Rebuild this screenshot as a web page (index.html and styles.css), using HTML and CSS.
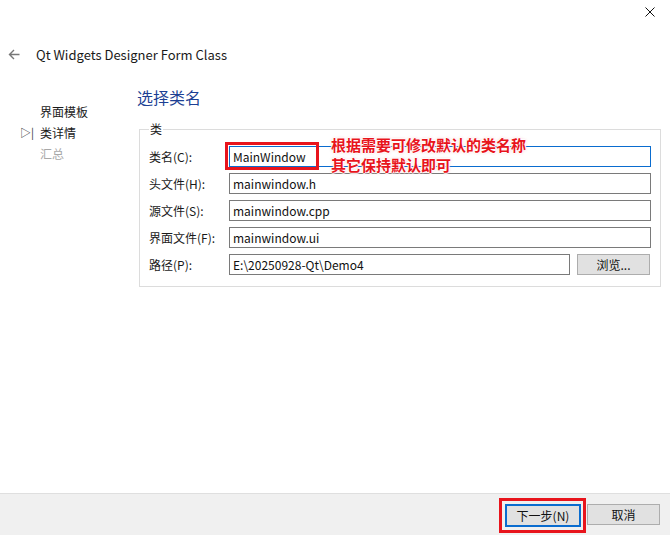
FILE: index.html
```html
<!DOCTYPE html>
<html lang="zh-CN">
<head>
  <meta charset="UTF-8">
  <title>Qt Widgets Designer Form Class</title>
  <link rel="stylesheet" href="styles.css">
</head>
<body>
  <div class="wizard">
    <div class="titlebar">
      <svg class="close" width="10" height="10" viewBox="0 0 10 10">
        <path d="M0.5 0.5 L9.5 9.5 M9.5 0.5 L0.5 9.5" stroke="#111" stroke-width="1"/>
      </svg>
    </div>

    <div class="header">
      <svg class="back" width="12" height="11" viewBox="0 0 12 11">
        <path d="M11.5 5.5 H1.5 M6 1 L1.5 5.5 L6 10" stroke="#777" stroke-width="1.4" fill="none"/>
      </svg>
      <span class="header-title">Qt Widgets Designer Form Class</span>
    </div>

    <div class="content">
      <!-- Steps -->
      <ul class="steps">
        <li>界面模板</li>
        <li class="current"><span class="marker">▷|</span>类详情</li>
        <li class="disabled">汇总</li>
      </ul>

      <div class="page">
        <h2 class="page-title">选择类名</h2>

        <fieldset class="group">
          <legend>类</legend>
          <div class="field-row">
            <label>类名(C):</label>
            <div class="input focused">MainWindow</div>
          </div>
          <div class="field-row">
            <label>头文件(H):</label>
            <div class="input">mainwindow.h</div>
          </div>
          <div class="field-row">
            <label>源文件(S):</label>
            <div class="input">mainwindow.cpp</div>
          </div>
          <div class="field-row">
            <label>界面文件(F):</label>
            <div class="input">mainwindow.ui</div>
          </div>
          <div class="field-row">
            <label>路径(P):</label>
            <div class="input path">E:\20250928-Qt\Demo4</div>
            <button class="btn browse">浏览...</button>
          </div>

          <!-- annotation drawn over the form -->
          <div class="mark-box name-mark"></div>
          <div class="note">根据需要可修改默认的类名称<br>其它保持默认即可</div>
        </fieldset>
      </div>
    </div>

    <div class="footer">
      <div class="mark-box next-mark">
        <button class="btn next">下一步(N)</button>
      </div>
      <button class="btn cancel">取消</button>
    </div>
  </div>
</body>
</html>
```

FILE: styles.css
```css
/* General */
body {
  margin: 0;
  font-family: "Noto Sans CJK SC", "Noto Sans", sans-serif;
  font-size: 12px;
  color: #1a1a1a;
  background: #fff;
}

.wizard {
  width: 670px;
  height: 535px;
  display: flex;
  flex-direction: column;
  background: #fff;
  overflow: hidden;
}

.titlebar {
  height: 25px;
  display: flex;
  justify-content: flex-end;
  align-items: flex-start;
}

.titlebar .close {
  margin: 7px 15px 0 0;
}

.header {
  height: 20px;
  margin-top: 19px;
  display: flex;
  align-items: center;
}

.header .back {
  margin-left: 8px;
  margin-right: 16px;
}

.header-title {
  font-size: 13px;
  color: #1a1a1a;
}

/* Content */
.content {
  flex: 1;
  display: flex;
}

.steps {
  width: 137px;
  margin: 0;
  padding: 37px 0 0 0;
  list-style: none;
}

.steps li {
  position: relative;
  height: 21px;
  line-height: 21px;
  padding-left: 40px;
  font-size: 12px;
}

.steps li .marker {
  position: absolute;
  left: 20px;
  top: 0;
  font-size: 11px;
  color: #333;
}

.steps li.disabled {
  color: #a8a8a8;
}

.page {
  flex: 1;
}

.page-title {
  margin: 22px 0 0 0;
  height: 22px;
  line-height: 22px;
  font-size: 16px;
  font-weight: normal;
  color: #1c3f94;
}

.group {
  position: relative;
  width: 499px;
  margin: 14px 0 0 2px;
  padding: 10px 9px 11px 9px;
  border: 1px solid #dcdcdc;
  border-radius: 0;
}

.group legend {
  padding: 0 1px;
  margin-left: 0;
  font-size: 12px;
  line-height: 14px;
}

.field-row {
  display: flex;
  align-items: center;
  height: 21px;
  margin-top: 6px;
}

.field-row:first-of-type {
  margin-top: 0;
}

.field-row label {
  width: 80px;
  flex: none;
}

.input {
  box-sizing: border-box;
  width: 422px;
  height: 21px;
  line-height: 19px;
  padding-left: 3px;
  border: 1px solid #7a7a7a;
  font-size: 12px;
  color: #111;
}

.input.focused {
  border-color: #0a6ccf;
}

.input.path {
  width: 341px;
}

.btn {
  box-sizing: border-box;
  font-family: inherit;
  font-size: 12px;
  color: #111;
  background: #e1e1e1;
  border: 1px solid #adadad;
  padding: 0;
}

.browse {
  width: 73px;
  height: 21px;
  margin-left: 7px;
}

/* Annotations */
.mark-box {
  border: 3px solid #e8141c;
  box-sizing: border-box;
}

.name-mark {
  position: absolute;
  left: 85px;
  top: 6px;
  width: 94px;
  height: 28px;
}

.note {
  position: absolute;
  left: 191px;
  top: -1px;
  font-size: 15px;
  font-weight: bold;
  line-height: 20px;
  color: #e8141c;
  text-shadow: 0 0 1px #fff, 1px 0 1px #fff, -1px 0 1px #fff, 0 1px 1px #fff, 0 -1px 1px #fff,
    0 0 3px rgba(232, 20, 28, 0.35);
}

/* Footer */
.footer {
  height: 41px;
  background: #f0f0f0;
  border-top: 1px solid #dfdfdf;
  display: flex;
  align-items: flex-start;
  justify-content: flex-end;
  padding-right: 10px;
}

.next-mark {
  margin-top: 4px;
  width: 87px;
  height: 35px;
  padding: 3px 0 0 3px;
}

.next {
  width: 76px;
  height: 23px;
  border: 2px solid #0a6ccf;
}

.cancel {
  width: 73px;
  height: 21px;
  margin-top: 10px;
  margin-left: 1px;
}
```
